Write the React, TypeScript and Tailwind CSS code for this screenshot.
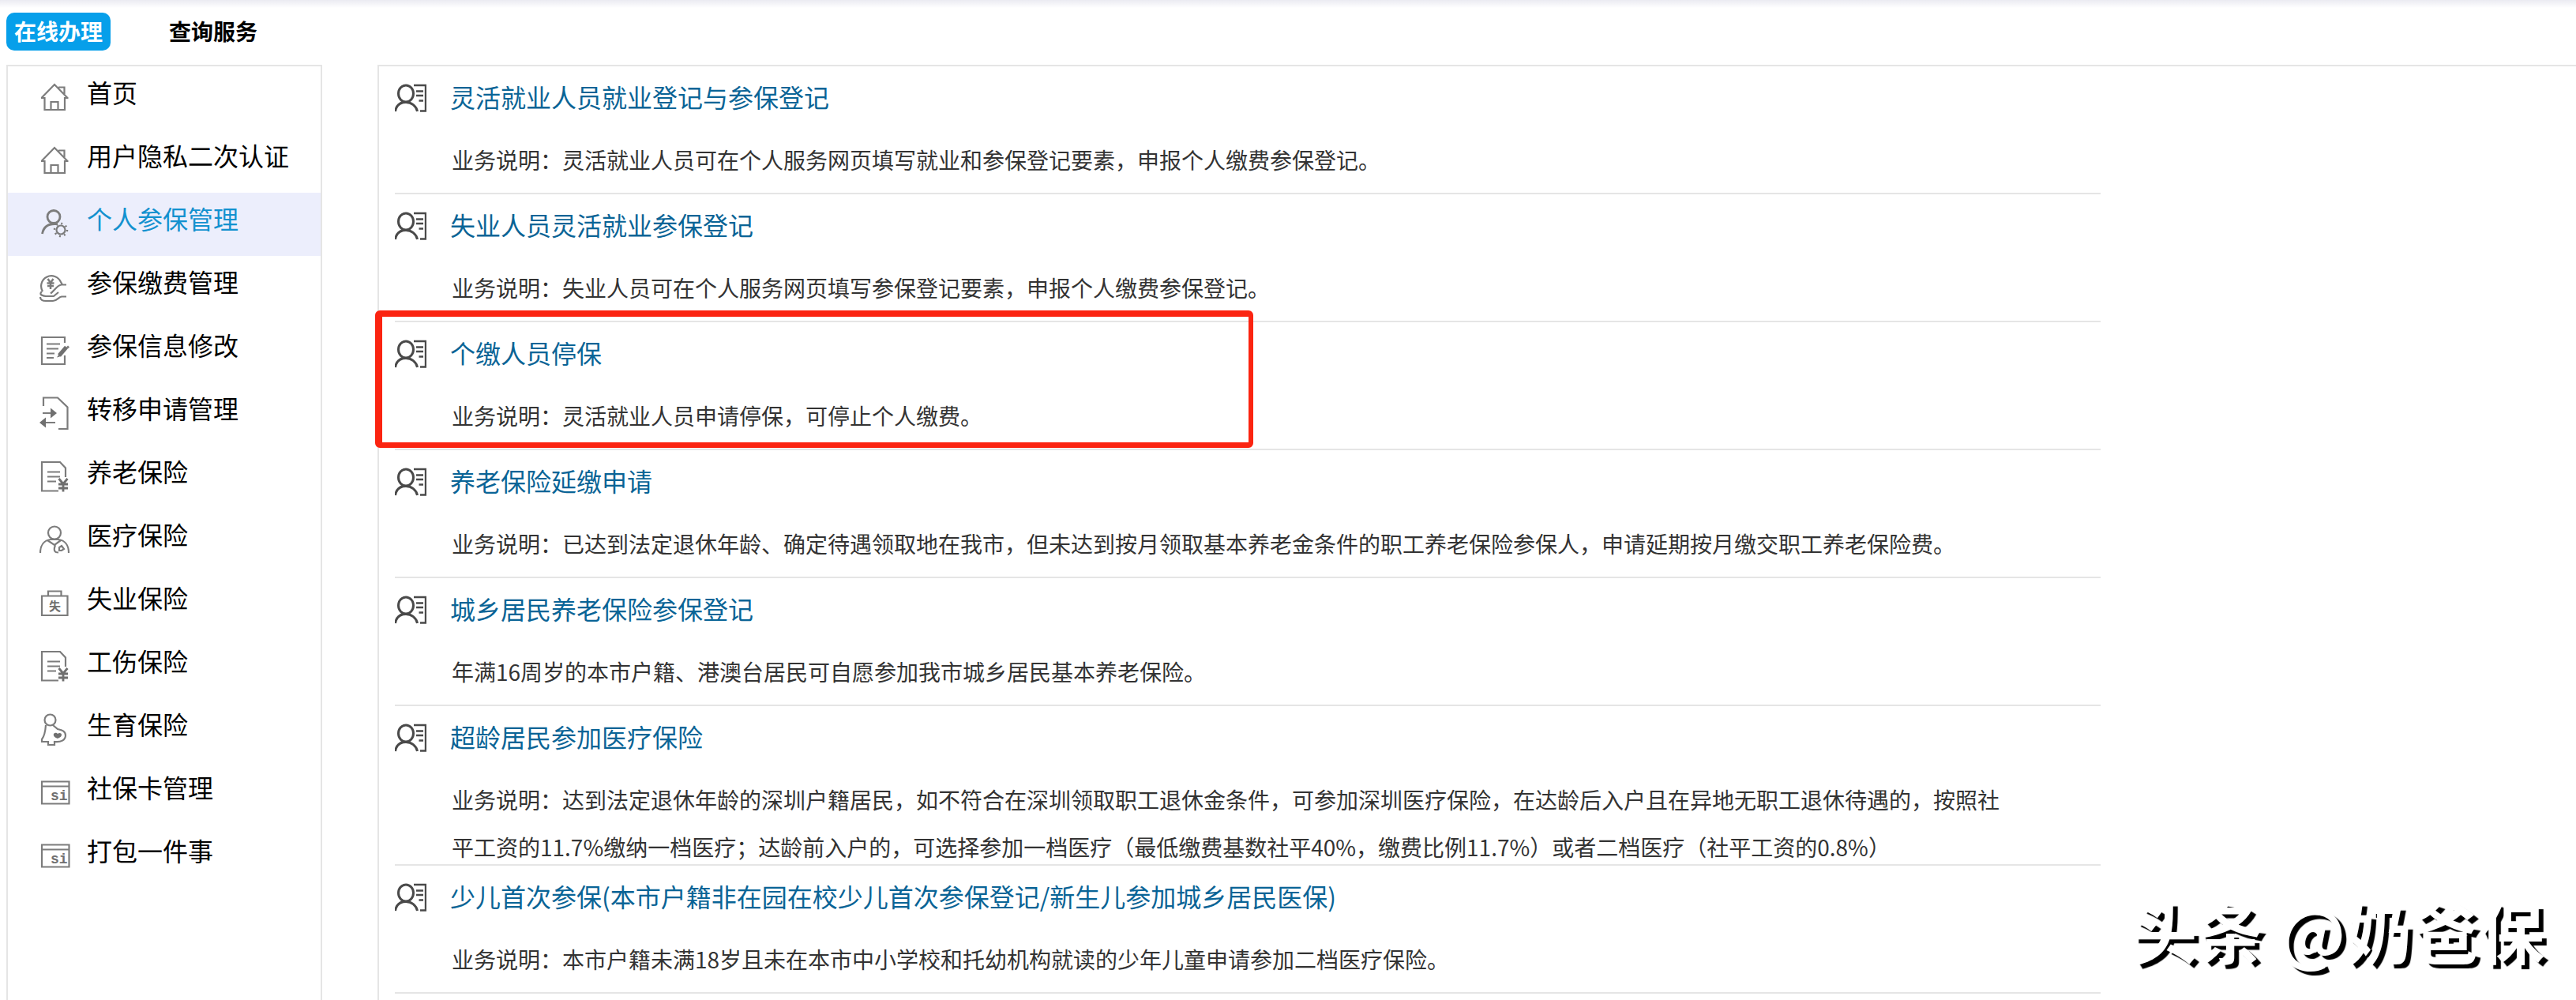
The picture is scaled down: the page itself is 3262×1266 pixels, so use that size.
import type { ReactNode } from 'react'

type MenuItem = {
  label: string
  icon: ReactNode
  active?: boolean
}

type Service = {
  title: string
  desc: string
  highlighted?: boolean
}

function Glyph({ children }: { children: ReactNode }) {
  return (
    <svg
      viewBox="0 0 40 44"
      className="h-11 w-10 shrink-0"
      fill="none"
      stroke="#7c7c7c"
      strokeWidth="2.2"
      aria-hidden="true"
    >
      {children}
    </svg>
  )
}

function HomeIcon() {
  return (
    <Glyph>
      <path d="M2.5 24 L19 7 L35.5 24 M2 24 H6.500 V39 H32 V24 H36.500 M24 10.500 H31.500 V19 M14.500 39 V29 H23.500 V39" />
    </Glyph>
  )
}

function UserGearIcon() {
  return (
    <Glyph>
      <circle cx="18" cy="14.500" r="8" strokeWidth="2.800" />
      <path d="M3.500 36 C5 28 10 23.500 19 23.500 H23" strokeWidth="2.800" />
      <circle cx="27" cy="31" r="5.500" />
      <circle cx="27" cy="31" r="8" strokeWidth="2.500" strokeDasharray="2 4.280" />
    </Glyph>
  )
}

function CoinHandIcon() {
  return (
    <Glyph>
      <path d="M4 29 A13 13 0 1 1 27 17 L29 20.500 H34" />
      <path d="M10.500 13 L14 18 L17.500 13 M9.500 18.500 H18.500 M10 22 H18 M14 18 V26" strokeWidth="2.500" />
      <path d="M28 20.500 C22 21 19 28 14 31.500 M24 30 L18 35 H13 M3 29 C0 32 1 34 8 35 L14 35 M1 36 C1 40 4 41 8 41 H17 C22 41 24 36 28 35.500 H34" />
    </Glyph>
  )
}

function EditDocIcon() {
  return (
    <Glyph>
      <path d="M32 14 V7 H3 V41 H32 V30 M9 15.500 H26 M9 21.500 H24 M9 27.500 H19 M9 33 H18" />
      <path d="M25 30 L34 19.500" strokeWidth="5" stroke="#707070" />
      <path d="M22 32.500 L25 28 L27 31 Z" fill="#707070" stroke="none" />
      <path d="M35 18.500 L37 20.500" strokeWidth="3" />
    </Glyph>
  )
}

function TransferIcon() {
  return (
    <Glyph>
      <path d="M5 14 V3.500 H23 L35.500 15.500 V43 H24 M4 23 H16 M8 35 H20" />
      <path d="M14 16.500 L22 23 L14 29.500 Z M8 28.500 L0 35 L8 41.500 Z" fill="#707070" stroke="none" />
    </Glyph>
  )
}

function YuanDocIcon() {
  return (
    <Glyph>
      <path d="M24 41.500 H3 V5 H26 L33 12.500 V24 M10 17.500 H26 M10 23.500 H26 M10 29.500 H21" />
      <path d="M24.500 26 L30 32.500 L35.500 26 M24 33 H36 M24 38 H36 M30 32 V42.500" strokeWidth="2.800" stroke="#6f6f6f" />
    </Glyph>
  )
}

function DoctorIcon() {
  return (
    <Glyph>
      <circle cx="19" cy="14.500" r="8" />
      <path d="M1 40 C1 30 6 24 14 23 H24 C32 24 37 30 37 40 M10 24 L19 30 L27 24 M20 30 C17 38 20 39.500 24 39.500" />
      <path d="M25 38 V33 L28 31 L31 35 L28 37 H25" />
    </Glyph>
  )
}

function CaseIcon() {
  return (
    <Glyph>
      <path d="M3 14.500 H35.500 V39 H3 Z M11 14 V8.500 H27.500 V14" />
      <text x="12" y="33" fontSize="15" fill="#707070" stroke="none" className="font-bold">
        失
      </text>
    </Glyph>
  )
}

function MotherIcon() {
  return (
    <Glyph>
      <circle cx="13.500" cy="11.500" r="7" />
      <path d="M8 18 C7.500 25 7 31 3 36 V39 H11 V43 H19 V39 C27 40 33 37 33 31 C33 25 27 24 23 23 L17 18" />
      <path d="M18 29 C20 27 22 28 23 29 C25 27 28 28 28 30 C28 33 25 34 23 35 C20 34 17 32 18 29 Z" fill="#707070" stroke="none" />
    </Glyph>
  )
}

function CardIcon() {
  return (
    <Glyph>
      <path d="M3 9.500 H37.500 V37.500 H3 Z M3 15.500 H37.500" />
      <text x="14" y="32.500" fontSize="18" fill="#707070" stroke="none" className="font-['Liberation_Mono',monospace] font-bold">
        si
      </text>
    </Glyph>
  )
}

function PersonListIcon() {
  return (
    <svg viewBox="0 0 40 36" className="h-9 w-10 shrink-0" fill="none" stroke="#4a4a4a" aria-hidden="true">
      <ellipse cx="14" cy="12.500" rx="9.500" ry="10.500" strokeWidth="3" />
      <path d="M0.500 35 C2 27 7 23.500 14 23.500 C21 23.500 27 28 28.500 35" strokeWidth="3" />
      <path d="M24 2 H39 V34.500 H32 M27 9.500 H36 M27 15 H36 M30.500 21.500 H36" strokeWidth="2.400" />
    </svg>
  )
}

const menu: MenuItem[] = [
  { label: '首页', icon: <HomeIcon /> },
  { label: '用户隐私二次认证', icon: <HomeIcon /> },
  { label: '个人参保管理', icon: <UserGearIcon />, active: true },
  { label: '参保缴费管理', icon: <CoinHandIcon /> },
  { label: '参保信息修改', icon: <EditDocIcon /> },
  { label: '转移申请管理', icon: <TransferIcon /> },
  { label: '养老保险', icon: <YuanDocIcon /> },
  { label: '医疗保险', icon: <DoctorIcon /> },
  { label: '失业保险', icon: <CaseIcon /> },
  { label: '工伤保险', icon: <YuanDocIcon /> },
  { label: '生育保险', icon: <MotherIcon /> },
  { label: '社保卡管理', icon: <CardIcon /> },
  { label: '打包一件事', icon: <CardIcon /> },
]

const services: Service[] = [
  {
    title: '灵活就业人员就业登记与参保登记',
    desc: '业务说明：灵活就业人员可在个人服务网页填写就业和参保登记要素，申报个人缴费参保登记。',
  },
  {
    title: '失业人员灵活就业参保登记',
    desc: '业务说明：失业人员可在个人服务网页填写参保登记要素，申报个人缴费参保登记。',
  },
  {
    title: '个缴人员停保',
    desc: '业务说明：灵活就业人员申请停保，可停止个人缴费。',
    highlighted: true,
  },
  {
    title: '养老保险延缴申请',
    desc: '业务说明：已达到法定退休年龄、确定待遇领取地在我市，但未达到按月领取基本养老金条件的职工养老保险参保人，申请延期按月缴交职工养老保险费。',
  },
  {
    title: '城乡居民养老保险参保登记',
    desc: '年满16周岁的本市户籍、港澳台居民可自愿参加我市城乡居民基本养老保险。',
  },
  {
    title: '超龄居民参加医疗保险',
    desc: '业务说明：达到法定退休年龄的深圳户籍居民，如不符合在深圳领取职工退休金条件，可参加深圳医疗保险，在达龄后入户且在异地无职工退休待遇的，按照社平工资的11.7%缴纳一档医疗；达龄前入户的，可选择参加一档医疗（最低缴费基数社平40%，缴费比例11.7%）或者二档医疗（社平工资的0.8%）',
  },
  {
    title: '少儿首次参保(本市户籍非在园在校少儿首次参保登记/新生儿参加城乡居民医保)',
    desc: '业务说明：本市户籍未满18岁且未在本市中小学校和托幼机构就读的少年儿童申请参加二档医疗保险。',
  },
]

function TopTabs() {
  return (
    <nav className="flex items-center gap-16 bg-gradient-to-b from-[#ebebf2] to-white to-[10px] px-2 pt-4 pb-[18px] text-[28px] leading-[46px] font-bold">
      <button type="button" className="rounded-[10px] bg-[#069fea] px-2.5 pb-0.5 text-white">
        在线办理
      </button>
      <button type="button" className="px-2.5 pb-0.5 text-black">
        查询服务
      </button>
    </nav>
  )
}

function Sidebar() {
  return (
    <aside className="w-[400px] shrink-0 border-2 border-b-0 border-[#e5e5e5]">
      <ul>
        {menu.map((item) => (
          <li key={item.label}>
            <a
              href="#"
              className={
                item.active
                  ? 'flex h-20 items-center gap-5 bg-[#eceefc] pb-1 pl-10 text-[#1391cf]'
                  : 'flex h-20 items-center gap-5 pb-1 pl-10 text-black'
              }
            >
              {item.icon}
              <span className="pb-3 text-[32px] leading-[48px]">{item.label}</span>
            </a>
          </li>
        ))}
      </ul>
    </aside>
  )
}

function ServiceRow({ service }: { service: Service }) {
  return (
    <li className="relative flex gap-[30px] border-b-2 border-[#e5e5e5]">
      <span className="flex h-20 items-center">
        <PersonListIcon />
      </span>
      <div className="min-w-0 flex-1">
        <h2 className="pb-1 text-[32px] leading-[76px] text-[#0a6496]">
          <a href="#">{service.title}</a>
        </h2>
        {/* the last text line runs down into the divider's padding */}
        <p className="-mb-2.5 min-h-[90px] pt-2 pr-[120px] pb-0.5 pl-0.5 text-[28px] leading-[60px] text-[#333]">
          {service.desc}
        </p>
      </div>
      {service.highlighted && (
        <div className="pointer-events-none absolute -top-[15px] -left-[25px] z-10 h-[174px] w-[1112px] rounded-md border-t-8 border-r-[6px] border-b-[7px] border-l-[9px] border-[#fb2411]" />
      )}
    </li>
  )
}

export default function App() {
  return (
    <div className="relative flex min-h-screen flex-col bg-white font-['Noto_Sans_CJK_SC',sans-serif]">
      <TopTabs />
      <div className="flex flex-1 gap-[70px] pl-2">
        <Sidebar />
        <main className="min-w-0 flex-1 border-t-2 border-l-2 border-[#e5e5e5] px-5">
          <ul className="max-w-[2160px]">
            {services.map((service) => (
              <ServiceRow key={service.title} service={service} />
            ))}
          </ul>
        </main>
      </div>
      <div className="pointer-events-none absolute right-10 bottom-7 text-[84px] leading-[120px] font-bold text-white [text-shadow:6px_5px_1px_#000]">
        头条 @奶爸保
      </div>
    </div>
  )
}
